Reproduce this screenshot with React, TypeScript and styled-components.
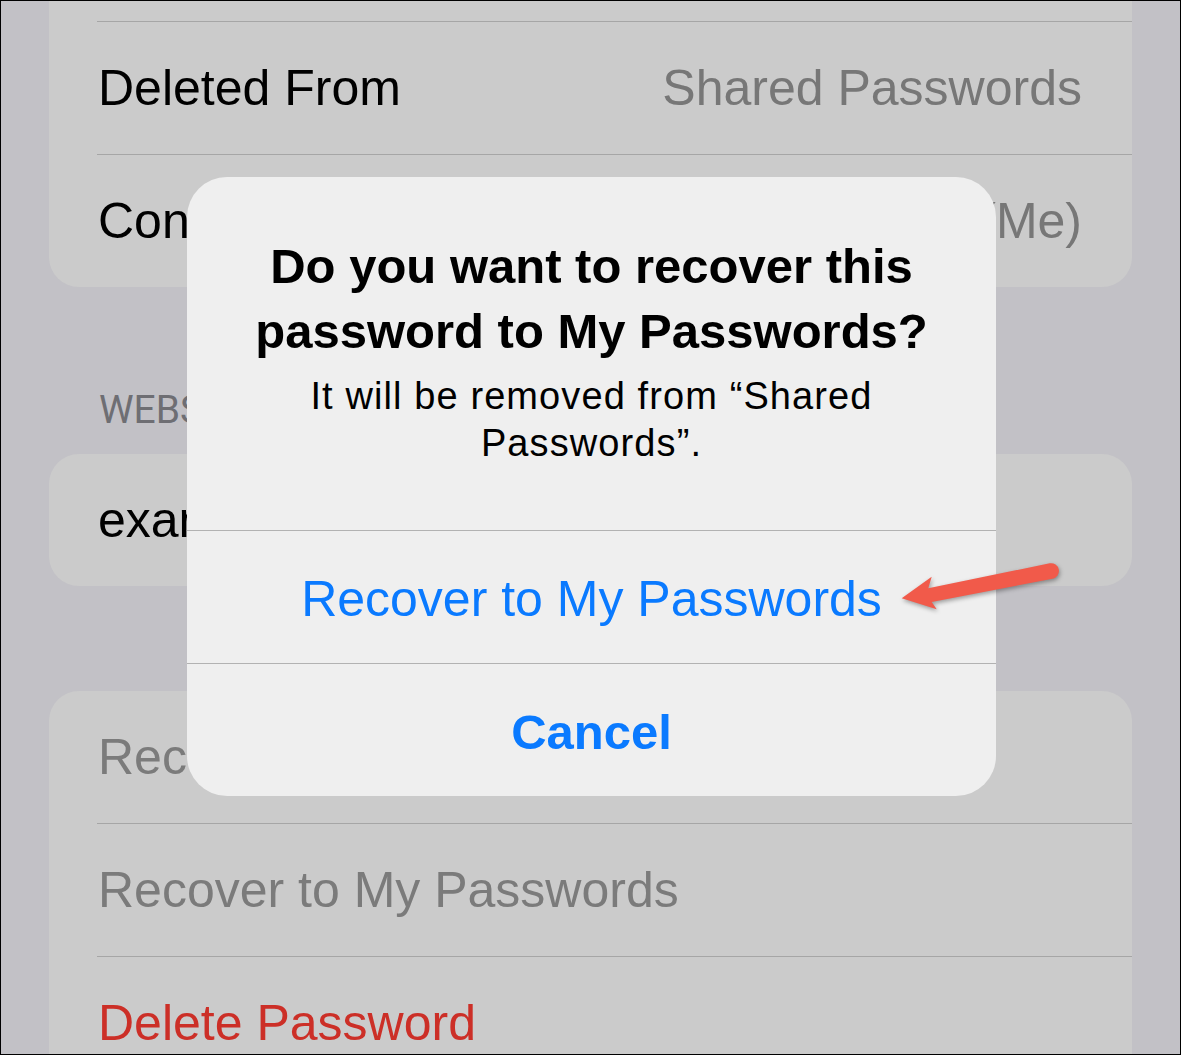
import React from "react";
import styled, { createGlobalStyle } from "styled-components";

const GlobalStyle = createGlobalStyle`
  html, body { margin: 0; padding: 0; background: #ffffff; }
  * { box-sizing: border-box; }
  body { font-family: "Liberation Sans", Arial, sans-serif; -webkit-font-smoothing: antialiased; }
`;

const Frame = styled.div`
  position: relative;
  width: 1181px;
  height: 1055px;
  border: 1px solid #000;
  background: #c2c1c6;
  overflow: hidden;
`;

const ScrollContent = styled.div`
  margin-top: -113px;
  padding: 0 48px;
  display: flex;
  flex-direction: column;
`;

const Card = styled.div<{ $gap?: number }>`
  background: #cbcbcb;
  border-radius: 30px;
  padding-left: 48px;
  margin-top: ${(p) => p.$gap ?? 0}px;
`;

const Row = styled.div<{ $height?: number }>`
  height: ${(p) => p.$height ?? 133}px;
  display: flex;
  align-items: center;
  justify-content: space-between;
  padding-left: 1px;
  padding-right: 50px;
  font-size: 50px;
  white-space: nowrap;
  & + & {
    border-top: 1px solid #a6a6a6;
  }
`;

const Label = styled.span<{ $tone?: "primary" | "muted" | "danger" }>`
  color: ${(p) =>
    p.$tone === "muted" ? "#7b7b7b" : p.$tone === "danger" ? "#cc2f27" : "#000000"};
`;

const Value = styled.span`
  color: #777777;
`;

const SectionHeader = styled.div`
  margin: 104px 0 24px 50px;
  font-family: Roboto, "Liberation Sans", sans-serif;
  font-size: 39px;
  line-height: 1;
  color: #6e6e73;
  text-transform: uppercase;
`;

const Overlay = styled.div`
  position: absolute;
  inset: 0;
  display: flex;
  justify-content: center;
  align-items: flex-start;
  padding-top: 176px;
  padding-left: 2px;
`;

const Alert = styled.div`
  width: 809px;
  background: #efefef;
  border-radius: 40px;
  overflow: hidden;
  display: flex;
  flex-direction: column;
`;

const AlertBody = styled.div`
  padding: 57px 40px 63px;
  text-align: center;
  color: #000;
`;

const AlertTitle = styled.div`
  font-size: 49px;
  font-weight: 700;
  line-height: 65px;
`;

const AlertMessage = styled.div`
  margin-top: 9px;
  font-size: 38px;
  line-height: 47px;
  letter-spacing: 1.1px;
`;

const AlertButton = styled.button<{ $bold?: boolean }>`
  height: 133px;
  border: 0;
  border-top: 1px solid #b2b2b2;
  background: transparent;
  font-family: "Liberation Sans", Arial, sans-serif;
  font-size: ${(p) => (p.$bold ? 49 : 50)}px;
  font-weight: ${(p) => (p.$bold ? 700 : 400)};
  color: #0a7aff;
  padding: 3px 0 0;
  cursor: pointer;
`;

const ArrowSvg = styled.svg`
  position: absolute;
  left: 879px;
  top: 549px;
  width: 200px;
  height: 80px;
  filter: drop-shadow(1px 2px 2px rgba(0, 0, 0, 0.35));
  overflow: visible;
`;

export default function App() {
  return (
    <>
      <GlobalStyle />
      <Frame>
        <ScrollContent>
          <Card>
            <Row />
            <Row>
              <Label>Deleted From</Label>
              <Value>Shared Passwords</Value>
            </Row>
            <Row>
              <Label>Contributed By</Label>
              <Value>Jane Appleseed (Me)</Value>
            </Row>
          </Card>

          <SectionHeader>Website</SectionHeader>
          <Card>
            <Row $height={132}>
              <Label>example.com</Label>
            </Row>
          </Card>

          <Card $gap={105}>
            <Row $height={132}>
              <Label $tone="muted">Recover to Shared Passwords</Label>
            </Row>
            <Row>
              <Label $tone="muted">Recover to My Passwords</Label>
            </Row>
            <Row>
              <Label $tone="danger">Delete Password</Label>
            </Row>
          </Card>
        </ScrollContent>

        <Overlay>
          <Alert>
            <AlertBody>
              <AlertTitle>
                Do you want to recover this
                <br />
                password to My Passwords?
              </AlertTitle>
              <AlertMessage>
                It will be removed from “Shared
                <br />
                Passwords”.
              </AlertMessage>
            </AlertBody>
            <AlertButton>Recover to My Passwords</AlertButton>
            <AlertButton $bold>Cancel</AlertButton>
          </Alert>
        </Overlay>

        <ArrowSvg viewBox="880 550 200 80">
          <path
            d="M 901.7 598.3 L 931.7 576.7 L 928.3 588.3 L 1049.7 563.3 A 7.8 7.8 0 0 1 1052.5 578.7 L 931.7 602 L 936.7 609.3 Z"
            fill="#f15a4a"
          />
        </ArrowSvg>
      </Frame>
    </>
  );
}
